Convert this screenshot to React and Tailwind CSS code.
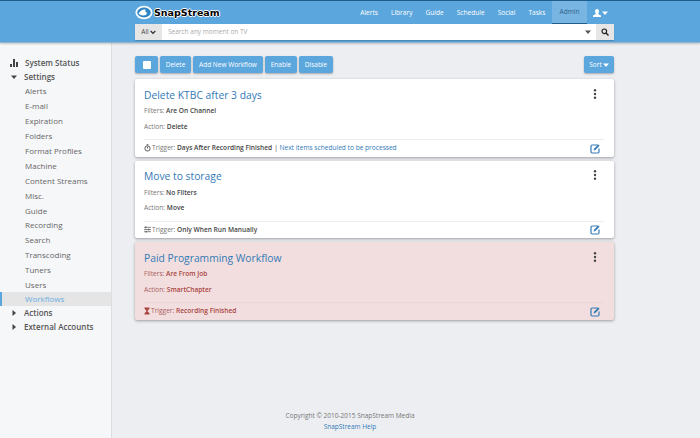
import React from "react";

const Caret = ({ dir = "down", className = "" }) => (
  <svg width="6" height="6" viewBox="0 0 6 6" className={className}>
    {dir === "down" ? <path d="M0 1.5h6L3 5z" fill="currentColor" /> : <path d="M1.5 0v6L5 3z" fill="currentColor" />}
  </svg>
);

const NAV = ["Alerts", "Library", "Guide", "Schedule", "Social", "Tasks"];
const SUB = ["Alerts", "E-mail", "Expiration", "Folders", "Format Profiles", "Machine", "Content Streams", "Misc.", "Guide", "Recording", "Search", "Transcoding", "Tuners", "Users"];

const Btn = ({ children, className = "" }) => (
  <div className={`h-[17px] rounded-[2px] bg-[#5ba6dd] shadow-[0_1px_2px_rgba(0,0,0,0.3)] text-white text-[6.5px] flex items-center justify-center ${className}`}>{children}</div>
);

const Timer = () => (
  <svg width="7" height="8" viewBox="0 0 8 9" className="text-[#444] mb-[1px]"><circle cx="4" cy="5" r="3" fill="none" stroke="currentColor" strokeWidth="1" /><path d="M3 .7h2M4 3v2" stroke="currentColor" strokeWidth="1" /></svg>
);
const Sliders = () => (
  <svg width="7" height="7" viewBox="0 0 8 8" className="text-[#555]"><path d="M0 1.500h8M0 4h8M0 6.500h8" stroke="currentColor" strokeWidth=".8" /><path d="M2 .5v2M5.500 3v2M2.500 5.500v2" stroke="currentColor" strokeWidth="1.200" /></svg>
);
const Hourglass = () => (
  <svg width="6" height="8" viewBox="0 0 7 9" className="text-[#a94442]"><path d="M.5.5h6v1L4 4.500 6.500 7.500v1h-6v-1L3 4.500.5 1.500z" fill="currentColor" /></svg>
);

const Card = ({ title, filters, action, icon, trigger, extra, danger }) => {
  const muted = danger ? "text-[#a9605f]" : "text-[#777]";
  const strong = danger ? "text-[#a94442]" : "text-[#444]";
  return (
    <div className={`h-[77.500px] rounded-[2px] shadow-[0_1px_3px_rgba(0,0,0,0.35)] pl-[9px] pr-[10px] flex flex-col ${danger ? "bg-[#f2dede]" : "bg-white"}`}>
      <div className="flex justify-between items-center h-[27px] shrink-0 pt-[2px]">
        <div className="text-[10.300px] leading-none text-[#337ab7] mt-[3px]">{title}</div>
        <svg width="4" height="10" viewBox="0 0 4 10" className="text-[#444] mr-[7px]">
          <circle cx="2" cy="1.300" r="1.200" fill="currentColor" /><circle cx="2" cy="5" r="1.200" fill="currentColor" /><circle cx="2" cy="8.700" r="1.200" fill="currentColor" />
        </svg>
      </div>
      <div className={`h-[10px] shrink-0 text-[6.600px] leading-[10px] ${muted}`}>Filters: <span className={`font-semibold ${strong}`}>{filters}</span></div>
      <div className={`h-[10px] shrink-0 text-[6.600px] leading-[10px] mt-[5.500px] ${muted}`}>Action: <span className={`font-semibold ${strong}`}>{action}</span></div>
      <div className={`mt-[7.500px] border-t ${danger ? "border-[#ecd5d5]" : "border-[#eeeeee]"} h-[17.500px] shrink-0 flex items-center justify-between`}>
        <div className={`text-[6.600px] flex items-center gap-[1px] ${muted}`}>
          {icon}
          <span>Trigger: <span className={`font-semibold ${strong}`}>{trigger}</span></span>
          {extra && <span className="ml-[1px] text-[#444]">| <span className="text-[#337ab7]">{extra}</span></span>}
        </div>
        <svg width="11" height="11" viewBox="0 0 11 11" className="text-[#337ab7] mr-[3px]">
          <path d="M8 2H2.200C1.500 2 1 2.500 1 3.200v5.600C1 9.500 1.500 10 2.200 10h5.600C8.500 10 9 9.500 9 8.800V5.500" fill="none" stroke="currentColor" strokeWidth="1.200" />
          <path d="M4 5.800 8.300 1.500l1.300 1.300L5.300 7.100 3.700 7.400z" fill="currentColor" />
        </svg>
      </div>
    </div>
  );
};

export default function App() {
  return (
    <div className="w-[700px] h-[438px] overflow-hidden bg-[#eceef2] flex flex-col text-[#555]" style={{ fontFamily: '"Open Sans", sans-serif' }}>
      <header className="h-[43px] shrink-0 bg-[#5ba6dd] border-t border-[#1f5f8f] border-b-[1px] border-b-[#8fb3d0] shadow-[0_1px_2px_rgba(0,0,0,0.2)] pl-[135px] pr-[86px] relative z-10">
        <div className="h-[23px] flex items-center justify-between">
          <div className="flex items-center gap-[1px] h-full">
            <svg width="18" height="15" viewBox="0 0 20 16">
              <ellipse cx="10" cy="8" rx="9.500" ry="7.500" fill="#fff" />
              <ellipse cx="10" cy="8" rx="7.500" ry="5.500" fill="#2f86c5" />
              <path d="M4 9c2-4 6-5 8-4-1 1-1 2 1 3 1 2-2 4-5 3-2 0-3-1-4-2z" fill="#fff" />
            </svg>
            <span className="text-[9.500px] font-bold leading-none text-black [text-shadow:-1px_0_0_#fff,1px_0_0_#fff,0_-1px_0_#fff,0_1px_0_#fff]" style={{ fontFamily: '"DejaVu Sans", sans-serif' }}>SnapStream</span>
          </div>
          <nav className="flex items-stretch h-full mr-[6px] text-[6.600px] text-white">
            {NAV.map((n) => (
              <div key={n} className="flex items-center px-[6.500px]">{n}</div>
            ))}
            <div className="flex items-center px-[7.500px] bg-[#78b5e3] text-[#2f5f85] border-b-[1px] border-[#1f5f8f]">Admin</div>
            <div className="flex items-center gap-[1px] pl-[6px] pr-0 text-white">
              <svg width="8" height="8" viewBox="0 0 8 8"><path d="M4 0c1.300 0 2 1 2 2.300S5.300 4.500 5 5l3 1.500V8H0V6.500L3 5c-.3-.5-1-1.400-1-2.700S2.700 0 4 0z" fill="currentColor" /></svg>
              <Caret />
            </div>
          </nav>
        </div>
        <div className="h-[16px] flex bg-white rounded-[1px] shadow-[0_1px_1px_rgba(0,0,0,0.2)]">
          <div className="w-[27px] bg-[#e6e6e6] text-[#444] text-[6.500px] flex items-center justify-center gap-[1px]">All <svg width="6" height="5" viewBox="0 0 6 5"><path d="M.7 1 3 3.400 5.300 1" fill="none" stroke="#333" strokeWidth="1.300" /></svg></div>
          <div className="flex-1 pl-[6px] text-[6.500px] text-[#aaa] flex items-center">Search any moment on TV</div>
          <div className="w-[11px] flex items-center text-[#555]"><Caret /></div>
          <div className="w-[18px] bg-[#e6e6e6] flex items-center justify-center">
            <svg width="8" height="8" viewBox="0 0 8 8"><circle cx="3.300" cy="3.300" r="2.300" fill="none" stroke="#222" strokeWidth="1.200" /><path d="M5 5l2.500 2.500" stroke="#222" strokeWidth="1.400" /></svg>
          </div>
        </div>
      </header>

      <div className="flex-1 flex min-h-0">
        <aside className="w-[112px] shrink-0 bg-[#f6f7f9] border-r border-[#dcdee2] pt-[13px] text-[8px] text-[#666]">
          <div className="h-[14px] flex items-center font-semibold text-[#555]">
            <svg width="8" height="8" viewBox="0 0 8 8" className="ml-[10px] mr-[7px] text-[#444]"><path d="M0 5h2v3H0zM3 0h2v8H3zM6 3h2v5H6z" fill="currentColor" /></svg>
            System Status
          </div>
          <div className="h-[14px] flex items-center font-semibold text-[#555]">
            <Caret className="ml-[11px] mr-[7px] text-[#444]" />Settings
          </div>
          {SUB.map((s) => (
            <div key={s} className="h-[14.900px] pl-[25px] flex items-center">{s}</div>
          ))}
          <div className="h-[14px] pl-[25px] flex items-center bg-[#e5e5e5] relative text-[#6aaee3]">
            <div className="absolute left-0 top-0 bottom-0 w-[1.500px] bg-[#5ba6dd]" />
            Workflows
          </div>
          {["Actions", "External Accounts"].map((s) => (
            <div key={s} className="h-[14px] flex items-center font-semibold text-[#555]">
              <Caret dir="right" className="ml-[11px] mr-[7px] text-[#444]" />{s}
            </div>
          ))}
        </aside>

        <main className="w-[479px] ml-[23px] flex flex-col pt-[13px] h-full">
          <div className="flex gap-[2px]">
            <Btn className="w-[23px]"><div className="w-[8px] h-[8px] bg-white rounded-[1px]" /></Btn>
            <Btn className="w-[31px]">Delete</Btn>
            <Btn className="w-[70px]">Add New Workflow</Btn>
            <Btn className="w-[32px]">Enable</Btn>
            <Btn className="w-[34px]">Disable</Btn>
            <Btn className="w-[30px] ml-auto gap-[1px]">Sort<Caret /></Btn>
          </div>
          <div className="mt-[6px] flex flex-col gap-[4px]">
            <Card title="Delete KTBC after 3 days" filters="Are On Channel" action="Delete" icon={<Timer />} trigger="Days After Recording Finished" extra="Next items scheduled to be processed" />
            <Card title="Move to storage" filters="No Filters" action="Move" icon={<Sliders />} trigger="Only When Run Manually" />
            <Card danger title="Paid Programming Workflow" filters="Are From Job" action="SmartChapter" icon={<Hourglass />} trigger="Recording Finished" />
          </div>
          <footer className="mt-auto pb-[6px] pr-[49px] text-center text-[6.500px] leading-[10.500px] text-[#777]">
            <div>Copyright © 2010-2015 SnapStream Media</div>
            <div className="text-[#337ab7]">SnapStream Help</div>
          </footer>
        </main>
      </div>
    </div>
  );
}
